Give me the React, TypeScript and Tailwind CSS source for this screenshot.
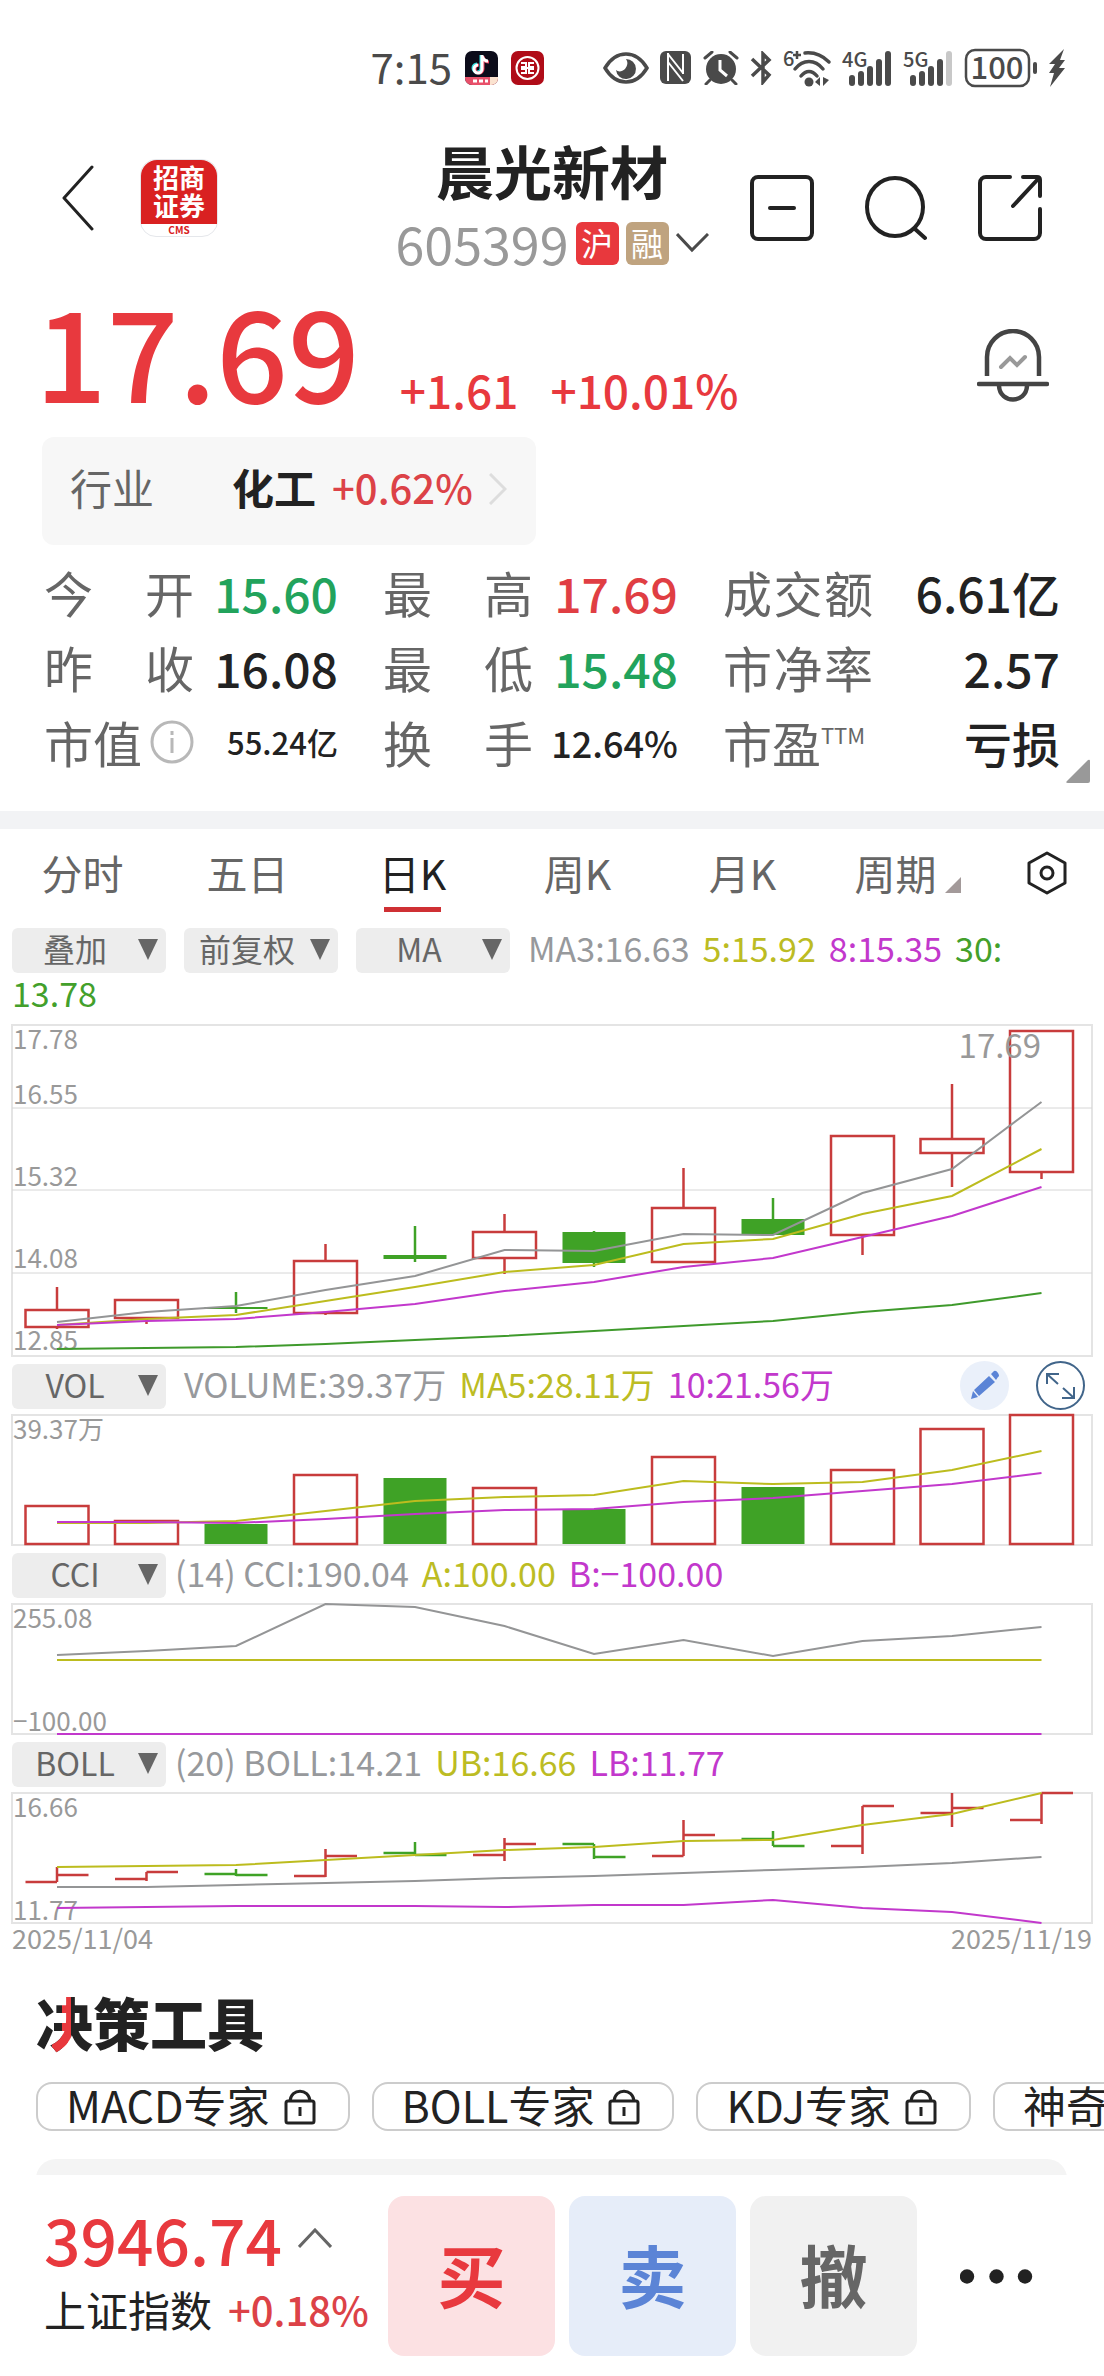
import { useState } from "react";
import type { ReactNode } from "react";

const RED = "#c83c3c";
const GREEN = "#3fa226";
const GRAY = "#949596";
const YELLOW = "#bcbc1e";
const MAGENTA = "#c238cc";

// x of the first bar and the step between bars, in chart units
const FIRST_X = 45;
const STEP = 89.5;
const HALF = 31.5;

const barX = (i: number) => FIRST_X + i * STEP;

type Candle = { up: boolean; high: number; top: number; bottom: number; low: number };

const candles: Candle[] = [
  { up: true, high: 262, top: 285, bottom: 302, low: 304 },
  { up: true, high: 275, top: 275, bottom: 293, low: 299 },
  { up: false, high: 267, top: 282, bottom: 284, low: 288 },
  { up: true, high: 219, top: 236, bottom: 288, low: 290 },
  { up: false, high: 201, top: 230, bottom: 234, low: 237 },
  { up: true, high: 189, top: 207, bottom: 233, low: 249 },
  { up: false, high: 206, top: 207, bottom: 238, low: 242 },
  { up: true, high: 143, top: 183, bottom: 237, low: 237 },
  { up: false, high: 173, top: 194, bottom: 210, low: 210 },
  { up: true, high: 111, top: 111, bottom: 210, low: 230 },
  { up: true, high: 59, top: 114, bottom: 128, low: 162 },
  { up: true, high: 6, top: 6, bottom: 147, low: 154 },
];

const volumes = [91, 106, 109, 60, 63, 73, 94, 42, 72, 55, 14, 0];

const ohlc = [
  { high: 74, low: 89, open: 89, close: 82 },
  { high: 79, low: 88, open: 86, close: 79 },
  { high: 76, low: 83, open: 81, close: 82 },
  { high: 56, low: 84, open: 83, close: 63 },
  { high: 49, low: 62, open: 60, close: 62 },
  { high: 45, low: 68, open: 62, close: 51 },
  { high: 51, low: 66, open: 51, close: 64 },
  { high: 27, low: 63, open: 63, close: 42 },
  { high: 38, low: 53, open: 46, close: 53 },
  { high: 13, low: 61, open: 53, close: 13 },
  { high: 0, low: 34, open: 20, close: 15 },
  { high: 0, low: 31, open: 27, close: 0 },
];

function Line({ ys, color }: { ys: number[]; color: string }) {
  const points = ys.map((y, i) => `${barX(i)},${y}`).join(" ");
  return <polyline points={points} fill="none" stroke={color} strokeWidth="2" />;
}

function AxisText({ y, children }: { y: number; children: ReactNode }) {
  return (
    <text x="1" y={y} fontSize="26" fill="#999999">
      {children}
    </text>
  );
}

function Chart({ height, label, children }: { height: number; label: string; children: ReactNode }) {
  return (
    <svg
      viewBox={`0 0 1080 ${height}`}
      className="block h-auto w-full overflow-visible"
      role="img"
      aria-label={label}
    >
      <rect x="0" y="0" width="1080" height={height} fill="none" stroke="#e4e4e4" strokeWidth="2" />
      {children}
    </svg>
  );
}

function CandleChart() {
  return (
    <Chart height={331} label="日K线图">
      {[83, 165, 248].map((y) => (
        <line key={y} x1="0" x2="1080" y1={y} y2={y} stroke="#d6d6d6" strokeWidth="1" />
      ))}
      {candles.map((c, i) => {
        const x = barX(i);
        const color = c.up ? RED : GREEN;
        return (
          <g key={i} stroke={color} strokeWidth="2.5">
            <line x1={x} x2={x} y1={c.high} y2={c.top} />
            <line x1={x} x2={x} y1={c.bottom} y2={c.low} />
            <rect
              x={x - HALF}
              y={c.top}
              width={HALF * 2}
              height={c.bottom - c.top}
              fill={c.up ? "none" : GREEN}
              strokeWidth={c.up ? 2.5 : 0}
            />
          </g>
        );
      })}
      <AxisText y={24}>17.78</AxisText>
      <AxisText y={79}>16.55</AxisText>
      <AxisText y={161}>15.32</AxisText>
      <AxisText y={243}>14.08</AxisText>
      <AxisText y={325}>12.85</AxisText>
      <text x="1029" y="33" fontSize="33" textAnchor="end" fill="#999999">
        17.69
      </text>
      <Line color={GRAY} ys={[297, 287, 281, 265, 251, 225, 226, 209, 210, 168, 144, 77]} />
      <Line color={YELLOW} ys={[300, 294, 290, 276, 262, 247, 240, 219, 214, 189, 171, 124]} />
      <Line color={MAGENTA} ys={[300, 296, 294, 287, 279, 266, 257, 242, 233, 212, 191, 162]} />
      <Line color="#3f9a2c" ys={[324, 323, 322, 319, 315, 311, 306, 301, 296, 287, 280, 268]} />
    </Chart>
  );
}

function VolumeChart() {
  return (
    <Chart height={130} label="成交量">
      {volumes.map((top, i) => {
        const up = candles[i].up;
        return (
          <rect
            key={i}
            x={barX(i) - HALF}
            y={top}
            width={HALF * 2}
            height={129 - top}
            fill={up ? "none" : GREEN}
            stroke={RED}
            strokeWidth={up ? 2.5 : 0}
          />
        );
      })}
      <AxisText y={24}>39.37万</AxisText>
      <Line color={YELLOW} ys={[108, 108, 106, 96, 86, 82, 80, 66, 69, 67, 55, 36]} />
      <Line color={MAGENTA} ys={[107, 107, 108, 104, 99, 95, 94, 87, 83, 76, 69, 58]} />
    </Chart>
  );
}

function CciChart() {
  return (
    <Chart height={130} label="CCI">
      <AxisText y={24}>255.08</AxisText>
      <AxisText y={127}>−100.00</AxisText>
      <Line color={GRAY} ys={[51, 47, 42, 0, 3, 22, 50, 36, 52, 37, 32, 23]} />
      <Line color={YELLOW} ys={Array(12).fill(56)} />
      <Line color={MAGENTA} ys={Array(12).fill(130)} />
    </Chart>
  );
}

function BollChart() {
  return (
    <Chart height={130} label="BOLL">
      {ohlc.map((d, i) => {
        const x = barX(i);
        return (
          <path
            key={i}
            d={`M${x} ${d.high}V${d.low}M${x - HALF} ${d.open}H${x}M${x} ${d.close}H${x + HALF}`}
            fill="none"
            stroke={candles[i].up ? RED : GREEN}
            strokeWidth="2.5"
          />
        );
      })}
      <AxisText y={24}>16.66</AxisText>
      <AxisText y={127}>11.77</AxisText>
      <Line color={GRAY} ys={[94, 94, 92, 90, 88, 85, 83, 80, 77, 74, 70, 64]} />
      <Line color={YELLOW} ys={[74, 73, 72, 67, 62, 57, 54, 48, 47, 32, 21, 0]} />
      <Line color={MAGENTA} ys={[115, 114, 113, 113, 113, 114, 112, 112, 107, 115, 119, 130]} />
    </Chart>
  );
}

function Signal({ label, last }: { label: string; last: string }) {
  return (
    <svg className="overflow-visible" width="50" height="38" viewBox="0 0 50 38" fill="#4a4a4a" aria-label={label}>
      <text x="0" y="18" fontSize="20" fontWeight="500">
        {label}
      </text>
      <rect x="7" y="26" width="6" height="11" rx="3" />
      <rect x="16" y="22" width="6" height="15" rx="3" />
      <rect x="25" y="17" width="6" height="20" rx="3" />
      <rect x="34" y="10" width="6" height="27" rx="3" />
      <rect x="43" y="2" width="6" height="35" rx="3" fill={last} />
    </svg>
  );
}

function StatusBar() {
  return (
    <div className="flex h-[140px] items-center justify-end gap-[11px] pr-[38px] pb-1 text-[#4a4a4a]">
      <div className="mr-12 flex items-center gap-[13px]">
        <span className="pb-1 text-[42px] leading-[42px]">7:15</span>
        <svg width="33" height="34" viewBox="0 0 33 34" aria-hidden="true">
          <defs>
            <clipPath id="note-clip">
              <rect width="33" height="34" rx="7" />
            </clipPath>
          </defs>
          <g clipPath="url(#note-clip)">
            <rect width="33" height="34" fill="#0c0c1a" />
            <rect y="26" width="33" height="8" fill="#e8506a" />
            <path d="M25 26h8v8h-8z" fill="#fbe3d0" />
            <g fill="none" strokeWidth="3">
              <path d="M16 4v13a4 4 0 1 1-4-4M16 5c1 3 3 5 6 5" stroke="#35e0e0" />
              <path d="M18 5v13a4 4 0 1 1-4-4M18 6c1 3 3 5 6 5" stroke="#f0425e" />
              <path d="M17 4v14a4 4 0 1 1-4-4M17 5c1 3 3 5 6 5" stroke="#ffffff" />
            </g>
            <path d="M8 30h4M14 30h4M20 30h3" stroke="#ffffff" strokeWidth="3" />
          </g>
        </svg>
        <svg width="33" height="34" viewBox="0 0 33 34" aria-hidden="true">
          <rect width="33" height="34" rx="7" fill="#b00c18" />
          <g fill="none" stroke="#ffffff" strokeWidth="2">
            <circle cx="16.500" cy="17" r="11" />
            <path d="M10 12h5v4h-4v2h4v4h-5M23 12h-5v4h4v2h-4v4h5M15 17h3" />
          </g>
        </svg>
      </div>
      <svg width="46" height="32" viewBox="0 0 46 32" aria-hidden="true">
        <path d="M2 16C8 6 15 2 23 2s15 4 21 14c-6 10-13 14-21 14S8 26 2 16z" fill="none" stroke="#4a4a4a" strokeWidth="3.500" />
        <path d="M23 7a10 10 0 1 1-10 11c2 2 6 2 9-1 3-4 3-7 1-10z" fill="#4a4a4a" />
      </svg>
      <svg width="32" height="34" viewBox="0 0 32 34" aria-hidden="true">
        <rect width="31" height="33" rx="6" fill="#4a4a4a" />
        <path d="M8 2v28M8 3l15 19M8 11l15 19M23 3v20" fill="none" stroke="#ffffff" strokeWidth="2" />
      </svg>
      <svg width="36" height="34" viewBox="0 0 36 34" aria-hidden="true">
        <circle cx="18" cy="18" r="15" fill="#4a4a4a" />
        <path d="M2 7l7-6M34 7l-7-6M7 29l-4 4M29 29l4 4" stroke="#4a4a4a" strokeWidth="3" strokeLinecap="round" />
        <path d="M17 9v10l7 6" fill="none" stroke="#ffffff" strokeWidth="3" />
      </svg>
      <svg width="22" height="34" viewBox="0 0 22 34" aria-hidden="true">
        <path d="M2 8l17 16-6 7V3l6 6L2 25" fill="none" stroke="#4a4a4a" strokeWidth="3.500" />
      </svg>
      <svg className="overflow-visible" width="48" height="38" viewBox="0 0 48 38" fill="#4a4a4a" aria-hidden="true">
        <text x="0" y="17" fontSize="20" fontWeight="500">
          6
        </text>
        <path d="M14 2v8M10 6h8" stroke="#4a4a4a" strokeWidth="2.500" />
        <g fill="none" stroke="#4a4a4a" strokeWidth="3.500" strokeLinecap="round">
          <path d="M22 4c10-1 18 3 24 9" />
          <path d="M12 20c8-10 20-10 28 0" />
          <path d="M18 27c5-6 11-6 16 0" />
        </g>
        <circle cx="26" cy="33" r="4.500" />
        <path d="M32 33l5-5v9M40 28v9l6-6" />
      </svg>
      <Signal label="4G" last="#4a4a4a" />
      <Signal label="5G" last="#c8c8c8" />
      <svg className="overflow-visible" width="74" height="40" viewBox="0 0 74 40" fill="#4a4a4a" aria-label="电量100">
        <rect x="2" y="2" width="63" height="36" rx="9" fill="none" stroke="#4a4a4a" strokeWidth="2.500" />
        <rect x="69" y="14" width="4" height="12" rx="2" />
        <text x="33" y="31" fontSize="31" fontWeight="500" textAnchor="middle">
          100
        </text>
      </svg>
      <svg width="17" height="38" viewBox="0 0 17 38" fill="#4a4a4a" aria-hidden="true">
        <path d="M15 0L0 15h6L0 24h5L1 38l15-19h-6l6-8h-5z" />
      </svg>
    </div>
  );
}

function Header() {
  return (
    <header className="grid grid-cols-[1fr_auto_1fr] items-center text-[#222222]">
      <div className="flex items-center gap-[46px] pb-3 pl-[62px]">
        <button type="button" aria-label="返回">
          <svg width="32" height="66" viewBox="0 0 32 66" fill="none" stroke="#222222" strokeWidth="3" strokeLinecap="round" strokeLinejoin="round">
            <path d="M30 2L2 33l28 31" />
          </svg>
        </button>
        <div className="h-[78px] w-[78px] rounded-2xl border border-gray-200 bg-white text-center font-bold">
          <div className="h-16 rounded-t-2xl bg-[#d92121] pt-[3px] text-[26px] leading-[28px] text-white">
            招商
            <br />
            证券
          </div>
          <div className="text-[10px] leading-[11px] text-[#d92121]">CMS</div>
        </div>
      </div>

      <div>
        <h1 className="text-center text-[58px] leading-[60px] font-bold">晨光新材</h1>
        <div className="mt-[18px] flex items-center gap-[7px]">
          <span className="text-[52px] leading-[50px] text-[#999999]">605399</span>
          <span className="h-[43px] w-[43px] rounded-md bg-[#e8383d] text-center text-[32px] leading-[41px] text-white">沪</span>
          <span className="h-[43px] w-[43px] rounded-md bg-[#bfa37f] text-center text-[32px] leading-[41px] text-white">融</span>
          <svg width="33" height="20" viewBox="0 0 33 20" fill="none" stroke="#4a4a4a" strokeWidth="3" aria-hidden="true">
            <path d="M1 1l15 16L32 1" />
          </svg>
        </div>
      </div>

      <div className="flex justify-end gap-[51px] pt-2 pr-[62px]">
        <button type="button" aria-label="移除自选">
          <svg width="64" height="66" viewBox="0 0 64 66" fill="none" stroke="#222222" strokeWidth="4" strokeLinecap="round">
            <rect x="2" y="2" width="60" height="62" rx="6" />
            <path d="M20 33h24" />
          </svg>
        </button>
        <button type="button" aria-label="搜索">
          <svg width="62" height="66" viewBox="0 0 62 66" fill="none" stroke="#222222" strokeWidth="4" strokeLinecap="round">
            <ellipse cx="30" cy="32" rx="28" ry="29" />
            <path d="M50 54l10 9" />
          </svg>
        </button>
        <button type="button" aria-label="分享">
          <svg width="64" height="66" viewBox="0 0 64 66" fill="none" stroke="#222222" strokeWidth="4" strokeLinecap="round">
            <path d="M32 2H8a6 6 0 0 0-6 6v50a6 6 0 0 0 6 6h48a6 6 0 0 0 6-6V34" />
            <path d="M45 2h14q3 0 3 3v16M61 3L35 31" />
          </svg>
        </button>
      </div>
    </header>
  );
}

function Stat({ label, value, valueClass, children }: { label: string; value: string; valueClass: string; children?: ReactNode }) {
  // two-character labels are spread over the width of three
  return (
    <div className="flex h-[75px] items-center justify-between whitespace-nowrap">
      <dt className="flex w-[150px] items-center justify-between text-[49px] leading-[60px] text-[#666666]">
        {children ? (
          <>
            <span>{label}</span>
            {children}
          </>
        ) : (
          label.split("").map((ch, i) => <span key={i}>{ch}</span>)
        )}
      </dt>
      <dd className={valueClass}>{value}</dd>
    </div>
  );
}

const num = "text-[48px] leading-[60px] font-medium";

function Quote() {
  return (
    <section>
      <div className="mt-[14px] flex items-end pr-[55px] pl-[35px] text-[#e8393e]">
        <span className="text-[126px] leading-[132px] font-medium">17.69</span>
        <span className="ml-10 text-[46px] leading-[50px] font-medium">+1.61</span>
        <span className="ml-8 text-[46px] leading-[50px] font-medium">+10.01%</span>
        <button type="button" className="mb-3 ml-auto" aria-label="预警">
          <svg width="72" height="73" viewBox="0 0 72 73" fill="none" stroke="#444444" strokeWidth="4.500" strokeLinecap="round">
            <path d="M10 47V28a26 26 0 0 1 52 0v19" strokeLinecap="butt" />
            <path d="M2 55h68M22 57c1 18 27 18 28 0" />
            <path d="M24 38l9-9 7 7 8-8" stroke="#999999" strokeWidth="4" />
          </svg>
        </button>
      </div>

      <a href="#industry" className="mt-[23px] ml-[42px] inline-flex h-[108px] w-[494px] items-center rounded-xl bg-[#f7f7f7] pb-2 pl-7 text-[42px] leading-[60px]">
        <span className="text-[#666666]">行业</span>
        <span className="ml-[78px] font-bold text-[#222222]">化工</span>
        <span className="ml-4 text-[40px] font-medium text-[#dc4247]">+0.62%</span>
        <svg className="mt-1 ml-4" width="18" height="32" viewBox="0 0 18 32" fill="none" stroke="#dddddd" strokeWidth="3" aria-hidden="true">
          <path d="M1 1l15 15L1 31" />
        </svg>
      </a>

      <div className="relative mt-[9px] pb-8">
        <dl className="grid grid-flow-col grid-cols-[293fr_294fr_336fr] grid-rows-3 gap-x-[45px] px-[44px]">
          <Stat label="今开" value="15.60" valueClass={`${num} text-[#22a35c]`} />
          <Stat label="昨收" value="16.08" valueClass={`${num} text-[#222222]`} />
          <Stat label="市值" value="55.24亿" valueClass="text-[31px] leading-[60px] font-medium text-[#222222]">
            <svg width="44" height="44" viewBox="0 0 44 44" fill="none" stroke="#b8b8b8" strokeWidth="3" aria-hidden="true">
              <circle cx="22" cy="22" r="20" />
              <path d="M22 18v15M22 11v4" />
            </svg>
          </Stat>
          <Stat label="最高" value="17.69" valueClass={`${num} text-[#e03e43]`} />
          <Stat label="最低" value="15.48" valueClass={`${num} text-[#22a35c]`} />
          <Stat label="换手" value="12.64%" valueClass="text-[36px] leading-[60px] font-medium text-[#222222]" />
          <Stat label="成交额" value="6.61亿" valueClass={`${num} text-[#222222]`} />
          <Stat label="市净率" value="2.57" valueClass={`${num} text-[#222222]`} />
          <Stat label="市盈" value="亏损" valueClass={`${num} text-[#222222]`}>
            <span className="pr-2 pb-4 text-[22px] leading-[24px]">TTM</span>
          </Stat>
        </dl>
        <svg className="absolute right-[14px] bottom-[28px]" width="24" height="24" viewBox="0 0 24 24" fill="#999999" aria-hidden="true">
          <path d="M24 2v20q0 2-2 2H2q-3 0-1-2L22 1q2-1 2 1z" />
        </svg>
      </div>
    </section>
  );
}

const tabs = ["分时", "五日", "日K", "周K", "月K", "周期"];

function PeriodTabs() {
  const [active, setActive] = useState("日K");
  return (
    <div className="box-content grid h-[98px] grid-cols-[repeat(6,165fr)_114fr] items-start border-t-[18px] border-[#f2f3f5]" role="tablist">
      {tabs.map((tab) => (
        <button
          key={tab}
          type="button"
          role="tab"
          aria-selected={tab === active}
          onClick={() => setActive(tab)}
          className={`flex flex-col items-center pt-[18px] text-[41px] leading-[50px] ${tab === active ? "text-[#222222]" : "text-[#666666]"}`}
        >
          <span className="flex items-end gap-2">
            {tab}
            {tab === "周期" && (
              <svg className="mb-1" width="16" height="16" viewBox="0 0 16 16" fill="#a39a9a" aria-hidden="true">
                <path d="M16 0v16H0z" />
              </svg>
            )}
          </span>
          {tab === active && <span className="mt-[10px] h-[5px] w-[57px] bg-[#cf3034]" />}
        </button>
      ))}
      <button type="button" className="mx-auto mt-[22px]" aria-label="设置">
        <svg width="40" height="44" viewBox="0 0 40 44" fill="none" stroke="#222222" strokeWidth="3" strokeLinejoin="round">
          <path d="M20 2l18 10v20L20 42 2 32V12z" />
          <circle cx="20" cy="22" r="6" />
        </svg>
      </button>
    </div>
  );
}

function Picker({ label, value, options }: { label: string; value: string; options: string[] }) {
  return (
    <div className="relative h-[45px] w-[154px] shrink-0">
      <select
        aria-label={label}
        defaultValue={value}
        className="h-full w-full appearance-none rounded-md bg-[#ededed] pr-7 pb-1 text-center text-[32px] leading-[41px] text-[#666666]"
      >
        {options.map((o) => (
          <option key={o}>{o}</option>
        ))}
      </select>
      <svg className="pointer-events-none absolute top-3 right-2" width="20" height="21" viewBox="0 0 20 21" fill="#666666" aria-hidden="true">
        <path d="M0 0h20L10 21z" />
      </svg>
    </div>
  );
}

const gray = "text-[#97999c]";
const yellow = "text-[#bcbc23]";
const magenta = "text-[#c238cc]";
const green = "text-[#43a02b]";

const indicators = ["VOL", "CCI", "BOLL", "MACD", "KDJ"];

function IndicatorRow({ name, children }: { name: string; children: ReactNode }) {
  return (
    <div className="flex h-[45px] items-center text-[34px] leading-[41px]">
      <Picker label={`${name}指标`} value={name} options={indicators} />
      {children}
    </div>
  );
}

function Charts() {
  return (
    <section className="px-3">
      <div className="flex h-[45px] items-center text-[34px] leading-[41px]">
        <div className="flex gap-[18px]">
          <Picker label="叠加" value="叠加" options={["叠加"]} />
          <Picker label="复权方式" value="前复权" options={["前复权", "后复权", "不复权"]} />
          <Picker label="均线指标" value="MA" options={["MA", "BOLL"]} />
        </div>
        <p className="ml-[18px] flex gap-[13px] pb-1 whitespace-nowrap">
          <span className={gray}>MA3:16.63</span>
          <span className={yellow}>5:15.92</span>
          <span className={magenta}>8:15.35</span>
          <span className={green}>30:</span>
        </p>
      </div>
      <p className={`mb-3 text-[34px] leading-[41px] ${green}`}>13.78</p>
      <CandleChart />

      <div className="my-[7px] flex items-center">
        <IndicatorRow name="VOL">
          <p className="ml-[18px] flex gap-[13px] pb-1 whitespace-nowrap">
            <span className={gray}>VOLUME:39.37万</span>
            <span className={yellow}>MA5:28.11万</span>
            <span className={magenta}>10:21.56万</span>
          </p>
        </IndicatorRow>
        <div className="-my-1 ml-auto flex gap-[27px] pr-[7px]">
          <button type="button" aria-label="画线">
            <svg width="49" height="49" viewBox="0 0 49 49">
              <circle cx="24.500" cy="24.500" r="24.500" fill="#eaf0fa" />
              <path d="M11 38l2-8 5 6zM14 29l15-14 6 6-16 14zM31 13l3-3q2-1 4 2t0 4l-2 3z" fill="#5b84d6" />
            </svg>
          </button>
          <button type="button" aria-label="全屏">
            <svg width="49" height="49" viewBox="0 0 49 49" fill="none" stroke="#41658a" strokeWidth="2">
              <circle cx="24.500" cy="24.500" r="23.500" />
              <path d="M11 23V13h12M11 13l11 10M38 26v11H26M38 37L27 27" />
            </svg>
          </button>
        </div>
      </div>
      <VolumeChart />

      <div className="my-[7px]">
        <IndicatorRow name="CCI">
          <p className="ml-[9px] flex gap-[13px] pb-1 whitespace-nowrap">
            <span className={gray}>(14) CCI:190.04</span>
            <span className={yellow}>A:100.00</span>
            <span className={magenta}>B:−100.00</span>
          </p>
        </IndicatorRow>
      </div>
      <CciChart />

      <div className="my-[7px]">
        <IndicatorRow name="BOLL">
          <p className="ml-[9px] flex gap-[13px] pb-1 whitespace-nowrap">
            <span className={gray}>(20) BOLL:14.21</span>
            <span className={yellow}>UB:16.66</span>
            <span className={magenta}>LB:11.77</span>
          </p>
        </IndicatorRow>
      </div>
      <BollChart />
      <div className="flex justify-between text-[27px] leading-[30px] text-[#999999]">
        <span>2025/11/04</span>
        <span>2025/11/19</span>
      </div>
    </section>
  );
}

function ExpertChip({ name }: { name: string }) {
  return (
    <button type="button" className="flex h-[49px] shrink-0 items-center gap-[14px] rounded-2xl border-2 border-[#cccccc] pr-8 pl-7 text-[43px] leading-[45px] text-[#222222]">
      <span className="pb-1">{name}</span>
      <svg width="32" height="36" viewBox="0 0 32 36" fill="none" stroke="#222222" strokeWidth="3" aria-hidden="true">
        <rect x="2" y="12" width="28" height="22" rx="2" />
        <path d="M6 12c1-13 19-13 20 0M16 18v9" />
      </svg>
    </button>
  );
}

function Tools() {
  return (
    <section className="mt-[34px] pl-9">
      <h2 className="text-[57px] leading-[68px] font-black text-[#222222]">
        <span className="text-transparent [background:linear-gradient(#e8383d,#e8383d)_16px_54px/16px_20px_no-repeat_text,linear-gradient(90deg,#222222_45%,#e8383d_45%,#e8383d_61%,#222222_61%)_text]">决</span>
        策工具
      </h2>
      <div className="mt-[27px] flex gap-[22px] overflow-hidden">
        <ExpertChip name="MACD专家" />
        <ExpertChip name="BOLL专家" />
        <ExpertChip name="KDJ专家" />
        <ExpertChip name="神奇九转" />
      </div>
      <div className="mt-7 mr-[37px] h-4 overflow-hidden">
        <div className="h-10 rounded-[20px] bg-[#f4f4f4]" />
      </div>
    </section>
  );
}

function TradeBar() {
  const base = "h-40 w-[167px] rounded-2xl pb-1 text-[68px] leading-[80px] font-bold";
  return (
    <footer className="flex items-center bg-white pt-[21px] pb-5 pl-11">
      <div className="w-[344px] pb-2">
        <div className="mb-2 flex items-center gap-4 text-[64px] leading-[66px] font-medium text-[#e8393e]">
          3946.74
          <svg width="34" height="20" viewBox="0 0 34 20" fill="none" stroke="#666666" strokeWidth="3" aria-hidden="true">
            <path d="M1 19L17 2l16 17" />
          </svg>
        </div>
        <div className="flex items-center gap-4 text-[42px] leading-[60px] whitespace-nowrap">
          <span className="text-[#222222]">上证指数</span>
          <span className="text-[40px] font-medium text-[#dc4247]">+0.18%</span>
        </div>
      </div>
      <div className="flex gap-[14px]">
        <button type="button" className={`${base} bg-[#fce1e3] text-[#e8393e]`}>
          买
        </button>
        <button type="button" className={`${base} bg-[#e6edf9] text-[#5b84d6]`}>
          卖
        </button>
        <button type="button" className={`${base} bg-[#f1f1f1] text-[#666666]`}>
          撤
        </button>
      </div>
      <button type="button" className="ml-[43px]" aria-label="更多">
        <svg width="73" height="15" viewBox="0 0 73 15" fill="#222222">
          <circle cx="7" cy="7.500" r="7.200" />
          <circle cx="36.500" cy="7.500" r="7.200" />
          <circle cx="65" cy="7.500" r="7.200" />
        </svg>
      </button>
    </footer>
  );
}

export default function App() {
  return (
    <div className="min-h-screen overflow-hidden bg-white font-['Noto_Sans_CJK_SC',sans-serif]">
      <StatusBar />
      <Header />
      <Quote />
      <PeriodTabs />
      <Charts />
      <Tools />
      <TradeBar />
    </div>
  );
}
